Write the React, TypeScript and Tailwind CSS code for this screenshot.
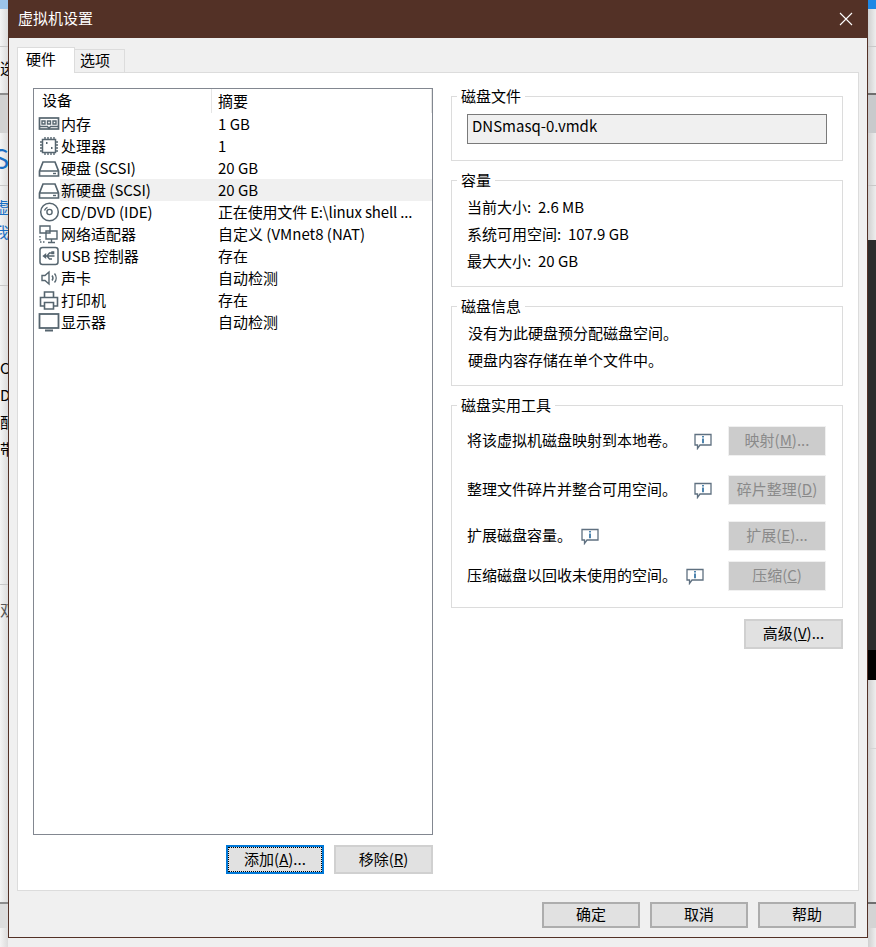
import React from 'react';

const font = { fontFamily: '"Noto Sans CJK SC", "Noto Sans", sans-serif' };

function Icon({ children }: { children: React.ReactNode }) {
  return (
    <svg width="22" height="22" viewBox="0 0 22 22" fill="none" stroke="#56656f" strokeWidth="1.4" className="shrink-0">
      {children}
    </svg>
  );
}

const DiskIcon = () => (
  <Icon>
    <path d="M1.5 14 L5 5 H17 L20.5 14 V19 H1.5 Z M1.5 14 H20.5" strokeWidth="1.7" />
    <path d="M15 16.5 H18" />
  </Icon>
);

const devices: { name: string; summary: React.ReactNode; icon: React.ReactNode; selected?: boolean }[] = [
  {
    name: '内存',
    summary: '1 GB',
    icon: (
      <Icon>
        <rect x="1.5" y="5" width="19" height="11" strokeWidth="1.7" />
        <path d="M4 8h3v3H4zM9.5 8h3v3h-3zM15 8h3v3h-3zM1.5 13.5h8l1.5 2 1.5-2h8" />
      </Icon>
    ),
  },
  {
    name: '处理器',
    summary: '1',
    icon: (
      <Icon>
        <rect x="4.5" y="4.5" width="13" height="13" strokeWidth="1.5" />
        <path d="M7 2v2M10 2v2M13 2v2M16 2v2M7 18v2M10 18v2M13 18v2M16 18v2M2 7h2M2 10h2M2 13h2M2 16h2M18 7h2M18 10h2M18 13h2M18 16h2" />
        <path d="M8 8h1.5M13 13h1.5" strokeWidth="2" />
      </Icon>
    ),
  },
  { name: '硬盘 (SCSI)', summary: '20 GB', icon: <DiskIcon /> },
  { name: '新硬盘 (SCSI)', summary: '20 GB', icon: <DiskIcon />, selected: true },
  {
    name: 'CD/DVD (IDE)',
    summary: <span className="tracking-[-0.17px]">正在使用文件 E:\linux shell ...</span>,
    icon: (
      <Icon>
        <circle cx="11.5" cy="11" r="8.8" strokeWidth="1.5" />
        <circle cx="11.5" cy="11" r="2.6" />
        <path d="M6.5 9.5a5.5 5.5 0 0 1 3-3.2" />
      </Icon>
    ),
  },
  {
    name: '网络适配器',
    summary: '自定义 (VMnet8 (NAT)',
    icon: (
      <Icon>
        <path d="M2 3h10v7H2zM8 8h11v8H8zM13.5 16v3M10 19.5h7" />
        <path d="M2 13v6h5" strokeDasharray="1.5 1.5" />
      </Icon>
    ),
  },
  {
    name: 'USB 控制器',
    summary: '存在',
    icon: (
      <Icon>
        <rect x="2" y="2.5" width="18" height="17" rx="2.5" strokeWidth="1.5" />
        <path d="M5.5 11h11M5.5 11l2-1.5v3zM9 11l2.5-3H14M9 11l2.5 3H14" />
        <path d="M14 7h1.6v1.6H14z" />
      </Icon>
    ),
  },
  {
    name: '声卡',
    summary: '自动检测',
    icon: (
      <Icon>
        <path d="M4 8.5h3l4-3.5v12l-4-3.5H4z" />
        <path d="M14 8.5a4 4 0 0 1 0 5M16.5 6.5a7 7 0 0 1 0 9" />
      </Icon>
    ),
  },
  {
    name: '打印机',
    summary: '存在',
    icon: (
      <Icon>
        <path d="M6.5 8V3h9v5M6 17H2.5V8.5h17V17H16" strokeWidth="1.6" />
        <path d="M6.5 13.5h9V20h-9z" strokeWidth="1.6" />
      </Icon>
    ),
  },
  {
    name: '显示器',
    summary: '自动检测',
    icon: (
      <Icon>
        <rect x="1.5" y="3" width="19" height="14" strokeWidth="1.8" />
        <path d="M7 19.5h8" strokeWidth="2" />
      </Icon>
    ),
  },
];

function GroupBox({ title, className, children }: { title: string; className: string; children?: React.ReactNode }) {
  return (
    <div className={`relative border border-[#dcdcdc] ${className}`}>
      <span className="absolute left-[5px] top-[-11px] h-[20px] bg-white px-[4px] text-[15px] leading-[19px] text-black">
        {title}
      </span>
      {children}
    </div>
  );
}

function Hint() {
  return (
    <svg width="18" height="17" viewBox="0 0 18 17" fill="none" className="shrink-0">
      <path d="M1 1.5h16v10.5H6L3.5 15.5V12H1z" stroke="#5f7080" strokeWidth="1.3" />
      <path d="M9 3v1.6M9 5.6v4.6" stroke="#2f6f9f" strokeWidth="1.7" />
    </svg>
  );
}

function DisabledButton({ children }: { children: React.ReactNode }) {
  return (
    <div className="flex h-[30px] w-[98px] shrink-0 items-center justify-center border border-[#f0f0f0] bg-[#cccccc] pb-[2px] text-[15px] text-[#8a8a8a]">
      {children}
    </div>
  );
}

function Button({ children }: { children: React.ReactNode }) {
  return (
    <div className="flex h-[26px] w-[98px] shrink-0 items-center justify-center border-2 border-[#adadad] bg-[#e1e1e1] pb-[2px] text-[15px] text-black">
      {children}
    </div>
  );
}

function ToolRow({ text, gap, className, button }: { text: string; gap: string; className: string; button: React.ReactNode }) {
  return (
    <div className={`flex items-center justify-between ${className}`}>
      <div className="flex items-center">
        <span className="pb-[2px] text-[15px] text-black">{text}</span>
        <span className={gap} />
        <Hint />
      </div>
      <DisabledButton>{button}</DisabledButton>
    </div>
  );
}

export default function App() {
  return (
    <div className="flex h-[947px] w-[876px] overflow-hidden bg-[#efefef]" style={font}>
      {/* bits of the window behind the dialog */}
      <div className="flex w-[8px] shrink-0 flex-col overflow-hidden bg-linear-to-r from-[#f4f4f4] to-[#dcdcdc] text-[15px] leading-[20px] text-black">
        <div className="h-[9px] bg-[#9cc4ea]" />
        <div className="h-[38px] border-b border-[#c8c8c8]" />
        <div className="h-[46px] pt-[11px] whitespace-nowrap">选</div>
        <div className="h-[40px] border-t-2 border-[#8c8c8c] bg-[#d2d2d2]" />
        <div className="h-[53px] border-b border-[#c8c8c8] pt-[13px] text-[27px] leading-[24px] whitespace-nowrap text-[#1a6fc4]">
          <span className="ml-[-7px] block">S</span>
        </div>
        <div className="h-[100px] border-b border-[#c8c8c8] pt-[11px] whitespace-nowrap text-[#1a6fc4]">
          <span className="ml-[-6px] block h-[25px]">虚</span>
          <span className="ml-[-6px] block">我</span>
        </div>
        <div className="h-[299px] border-b border-[#c8c8c8] pt-[72px] whitespace-nowrap">
          <span className="block h-[27px]">C</span>
          <span className="block h-[27px]">D</span>
          <span className="block h-[27px]">配</span>
          <span className="block">带</span>
        </div>
        <div className="h-[317px] pt-[15px] whitespace-nowrap text-[#555555]">双</div>
        <div className="h-[26px] border-t-2 border-[#8c8c8c] bg-[#dddddd]" />
        <div className="flex-1" />
      </div>

      <div className="flex h-[938px] w-[860px] shrink-0 flex-col border border-t-0 border-[#533126] bg-[#f0f0f0]">
        <div className="flex h-[38px] shrink-0 items-center justify-between bg-[#533126] pl-[9px] pr-[14px] text-[15px] text-white">
          <span className="pb-[2px]">虚拟机设置</span>
          <svg width="14" height="14" viewBox="0 0 14 14" stroke="#ffffff" strokeWidth="1.1">
            <path d="M1 1l12 12M13 1L1 13" />
          </svg>
        </div>

        <div className="flex pl-[8px] pt-[9px] text-[15px] text-black">
          <div className="z-10 mb-[-1px] flex h-[26px] w-[58px] items-center border border-b-0 border-[#dcdcdc] bg-white pb-[2px] pl-[8px]">
            硬件
          </div>
          <div className="mt-[2px] flex h-[23px] w-[50px] items-center border border-b-0 border-l-0 border-[#dcdcdc] pb-[1px] pl-[5px]">
            选项
          </div>
        </div>

        <div className="mx-[8px] flex h-[819px] border border-[#dcdcdc] bg-white pl-[15px] pt-[15px]">
          <div className="flex w-[400px] flex-col">
            <div className="h-[747px] border border-[#828790] text-[15px] text-black">
              <div className="flex h-[24px] items-center">
                <span className="w-[177px] pb-[1px] pl-[8px]">设备</span>
                <span className="h-full flex-1 border-x border-[#e5e5e5] pl-[6px] leading-[23px]">摘要</span>
              </div>
              {devices.map((d) => (
                <div key={d.name} className="flex h-[22px] items-center pl-[4px]">
                  <span className="flex h-full w-[174px] items-center">
                    {d.icon}
                    <span className={`flex h-full flex-1 items-center pl-[1px] ${d.selected ? 'bg-[#f0f0f0]' : ''}`}>{d.name}</span>
                  </span>
                  <span className={`flex h-full flex-1 items-center whitespace-pre pl-[6px] ${d.selected ? 'bg-[#f0f0f0]' : ''}`}>
                    {d.summary}
                  </span>
                </div>
              ))}
            </div>
            <div className="mt-[10px] flex justify-end gap-[10px]">
              <div className="flex h-[29px] w-[98px] items-center justify-center border-2 border-[#0078d7] bg-[#e1e1e1] pb-[1px] text-[15px] text-black outline-1 -outline-offset-3 outline-dotted outline-black">
                添加(<span className="underline">A</span>)...
              </div>
              <div className="flex h-[29px] w-[99px] items-center justify-center border-2 border-[#d0d0d0] bg-[#e1e1e1] pb-[1px] text-[15px] text-black">
                移除(<span className="underline">R</span>)
              </div>
            </div>
          </div>

          <div className="ml-[18px] flex w-[392px] flex-col pt-[8px]">
            <GroupBox title="磁盘文件" className="h-[65px] pl-[15px] pt-[17px]">
              <div className="flex h-[30px] w-[360px] items-center border border-[#7a7a7a] bg-[#f0f0f0] pb-[5px] pl-[4px] text-[15px] text-black">
                DNSmasq-0.vmdk
              </div>
            </GroupBox>
            <GroupBox title="容量" className="mt-[19px] h-[107px] whitespace-pre pl-[15px] pt-[12px] text-[15px] leading-[27px] text-black">
              <div>当前大小:  2.6 MB</div>
              <div>系统可用空间:  107.9 GB</div>
              <div>最大大小:  20 GB</div>
            </GroupBox>
            <GroupBox title="磁盘信息" className="mt-[19px] h-[80px] pl-[16px] pt-[12px] text-[15px] leading-[27px] text-black">
              <div>没有为此硬盘预分配磁盘空间。</div>
              <div>硬盘内容存储在单个文件中。</div>
            </GroupBox>
            <GroupBox title="磁盘实用工具" className="mt-[19px] h-[203px] pl-[15px] pr-[16px] pt-[20px]">
              <ToolRow text="将该虚拟机磁盘映射到本地卷。" gap="w-[17px]" className="h-[30px]" button={<>映射(<span className="underline">M</span>)...</>} />
              <ToolRow text="整理文件碎片并整合可用空间。" gap="w-[17px]" className="mt-[19px] h-[30px]" button={<>碎片整理(<span className="underline">D</span>)</>} />
              <ToolRow text="扩展磁盘容量。" gap="w-[9px]" className="mt-[16px] h-[30px]" button={<>扩展(<span className="underline">E</span>)...</>} />
              <ToolRow text="压缩磁盘以回收未使用的空间。" gap="w-[9px]" className="mt-[10px] h-[30px]" button={<>压缩(<span className="underline">C</span>)</>} />
            </GroupBox>
            <div className="mt-[11px] flex justify-end">
              <div className="flex h-[30px] w-[99px] items-center justify-center border-2 border-[#d0d0d0] bg-[#e1e1e1] pb-[2px] text-[15px] text-black">
                高级(<span className="underline">V</span>)...
              </div>
            </div>
          </div>
        </div>

        <div className="mt-[11px] flex justify-end gap-[10px] pr-[11px]">
          <Button>确定</Button>
          <Button>取消</Button>
          <Button>帮助</Button>
        </div>
      </div>

      <div className="flex w-[8px] shrink-0 flex-col bg-linear-to-r from-[#d0d0d0] to-[#eeeeee]">
        <div className="h-[9px] bg-[#1e88e5]" />
        <div className="h-[38px] border-b border-[#c8c8c8]" />
        <div className="h-[46px]" />
        <div className="h-[40px] border-t-2 border-[#6e6e6e] bg-[#c8cacc]" />
        <div className="h-[53px] border-b border-[#c8c8c8]" />
        <div className="h-[54px]" />
        <div className="h-[410px] bg-[#2b2b2b]" />
        <div className="h-[30px] bg-black" />
        <div className="h-[69px] border-b border-[#d4d4d4]" />
        <div className="h-[153px]" />
        <div className="h-[26px] border-t-2 border-[#6e6e6e] bg-[#d4d4d4]" />
        <div className="flex-1" />
      </div>
    </div>
  );
}
